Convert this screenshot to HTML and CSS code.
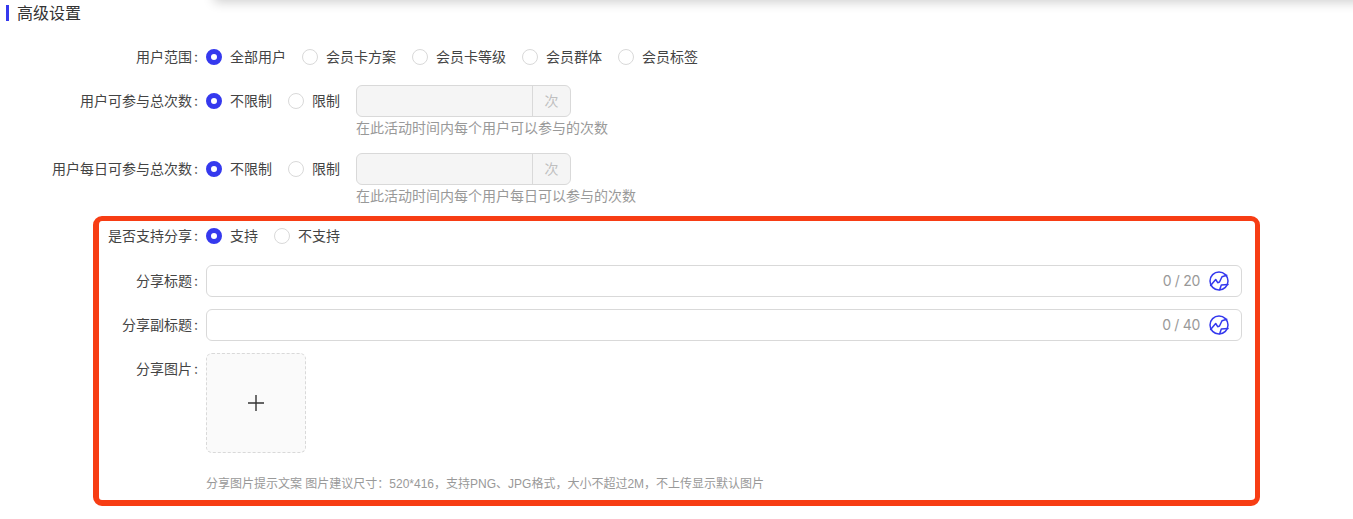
FILE: index.html
```html
<!DOCTYPE html>
<html lang="zh-CN">
<head>
<meta charset="utf-8">
<title>高级设置</title>
<link rel="stylesheet" href="styles.css">
</head>
<body>
<div class="top-shadow"></div>
<main class="page">
  <h2 class="section-title">高级设置</h2>

  <div class="row">
    <div class="label">用户范围<span class="colon">:</span></div>
    <div class="radios">
      <span class="radio checked"><i></i>全部用户</span>
      <span class="radio"><i></i>会员卡方案</span>
      <span class="radio"><i></i>会员卡等级</span>
      <span class="radio"><i></i>会员群体</span>
      <span class="radio"><i></i>会员标签</span>
    </div>
  </div>

  <div class="row row-hinted">
    <div class="label">用户可参与总次数<span class="colon">:</span></div>
    <div class="radios">
      <span class="radio checked"><i></i>不限制</span>
      <span class="radio"><i></i>限制</span>
    </div>
    <div class="limit">
      <div class="addon-input"><div class="addon-field"></div><div class="addon">次</div></div>
      <div class="hint">在此活动时间内每个用户可以参与的次数</div>
    </div>
  </div>

  <div class="row row-hinted">
    <div class="label">用户每日可参与总次数<span class="colon">:</span></div>
    <div class="radios">
      <span class="radio checked"><i></i>不限制</span>
      <span class="radio"><i></i>限制</span>
    </div>
    <div class="limit">
      <div class="addon-input"><div class="addon-field"></div><div class="addon">次</div></div>
      <div class="hint">在此活动时间内每个用户每日可以参与的次数</div>
    </div>
  </div>

  <section class="highlight">
    <div class="row row-share">
      <div class="label">是否支持分享<span class="colon">:</span></div>
      <div class="radios">
        <span class="radio checked"><i></i>支持</span>
        <span class="radio"><i></i>不支持</span>
      </div>
    </div>

    <div class="row">
      <div class="label">分享标题<span class="colon">:</span></div>
      <div class="text-input">
        <span class="count">0 / 20</span>
        <svg class="globe" viewBox="0 0 20 20" fill="none" stroke="currentColor" stroke-width="1.5" stroke-linejoin="round" stroke-linecap="round"><circle cx="10" cy="10" r="9"/><path d="M1.6 14.5 L6.7 8.5 L8.7 11.7 L10.5 11 L13 5.7 L17.8 4.2"/><path d="M10.7 18.8 L12.3 14 L19 13.5"/></svg>
      </div>
    </div>

    <div class="row">
      <div class="label">分享副标题<span class="colon">:</span></div>
      <div class="text-input">
        <span class="count">0 / 40</span>
        <svg class="globe" viewBox="0 0 20 20" fill="none" stroke="currentColor" stroke-width="1.5" stroke-linejoin="round" stroke-linecap="round"><circle cx="10" cy="10" r="9"/><path d="M1.6 14.5 L6.7 8.5 L8.7 11.7 L10.5 11 L13 5.7 L17.8 4.2"/><path d="M10.7 18.8 L12.3 14 L19 13.5"/></svg>
      </div>
    </div>

    <div class="row row-upload">
      <div class="label">分享图片<span class="colon">:</span></div>
      <div class="upload">
        <svg viewBox="0 0 16 16" class="plus" fill="none" stroke="currentColor" stroke-width="1.4"><path d="M8 0V16M0 8H16"/></svg>
      </div>
    </div>

    <div class="upload-hint">分享图片提示文案 图片建议尺寸：520*416，支持PNG、JPG格式，大小不超过2M，不上传显示默认图片</div>
  </section>
</main>
</body>
</html>
```
FILE: styles.css
```css
* { box-sizing: border-box; }
html, body { margin: 0; padding: 0; height: 519px; overflow: hidden; background: #fff; }
body {
  position: relative;
  font-family: "Inter", "Noto Sans CJK SC", sans-serif;
  font-size: 14px;
  line-height: 22px;
  color: #444;
}
.top-shadow {
  position: absolute;
  left: 214px;
  right: -40px;
  top: -30px;
  height: 30px;
  box-shadow: 0 2px 12px rgba(0, 0, 0, 0.2);
}
.page { padding-top: 5px; --label-w: 198px; }
.section-title {
  margin: 0 0 20px 6px;
  padding-left: 8px;
  height: 16px;
  line-height: 16px;
  border-left: 3px solid #3539ee;
  font-size: 16px;
  font-weight: 400;
  color: #333;
}
.row { display: flex; align-items: flex-start; margin-bottom: 12px; }
.row-hinted { margin-bottom: 14px; }
.label {
  flex: none;
  width: var(--label-w);
  margin-right: 8px;
  height: 32px;
  line-height: 32px;
  text-align: right;
  white-space: nowrap;
}
.colon { margin-left: 2px; }
.radios { display: flex; gap: 16px; height: 32px; align-items: center; }
.radio { display: flex; align-items: center; gap: 8px; white-space: nowrap; }
.radio i {
  flex: none;
  width: 16px;
  height: 16px;
  border: 1px solid #d9d9d9;
  border-radius: 50%;
  background: #fff;
}
.radio.checked i { border: 5px solid #3539ee; }
.limit { margin-left: 16px; width: 300px; }
.addon-input {
  display: flex;
  width: 215px;
  height: 32px;
  border: 1px solid #d9d9d9;
  border-radius: 6px;
  background: #f5f5f5;
}
.addon-field { flex: 1; }
.addon {
  width: 38px;
  border-left: 1px solid #d9d9d9;
  text-align: center;
  line-height: 30px;
  color: #bfbfbf;
}
.hint { color: #999; height: 22px; white-space: nowrap; }
.highlight {
  width: 1167px;
  height: 290px;
  margin-left: 93px;
  margin-top: -5px;
  border: 5px solid #f73d14;
  border-left-width: 6px;
  border-bottom-width: 6px;
  border-radius: 9px;
  padding-right: 13px;
  --label-w: 99px;
}
.row-share { margin-bottom: 13px; margin-top: -1px; }
.text-input {
  flex: 1;
  height: 32px;
  display: flex;
  align-items: center;
  justify-content: flex-end;
  gap: 9px;
  padding-right: 12px;
  border: 1px solid #d9d9d9;
  border-radius: 6px;
  background: #fff;
}
.count { color: #999; letter-spacing: -0.3px; }
.globe { width: 20px; height: 20px; color: #3539ee; flex: none; }
.row-upload { margin-bottom: 20px; }
.upload {
  width: 100px;
  height: 100px;
  display: flex;
  align-items: center;
  justify-content: center;
  border: 1px dashed #d9d9d9;
  border-radius: 6px;
  background: #fafafa;
  color: #333;
}
.plus { width: 16px; height: 16px; }
.upload-hint {
  margin-left: 107px;
  font-family: "Liberation Sans", "Noto Sans CJK SC", sans-serif;
  font-size: 12px;
  line-height: 22px;
  color: #999;
  white-space: nowrap;
}
```
